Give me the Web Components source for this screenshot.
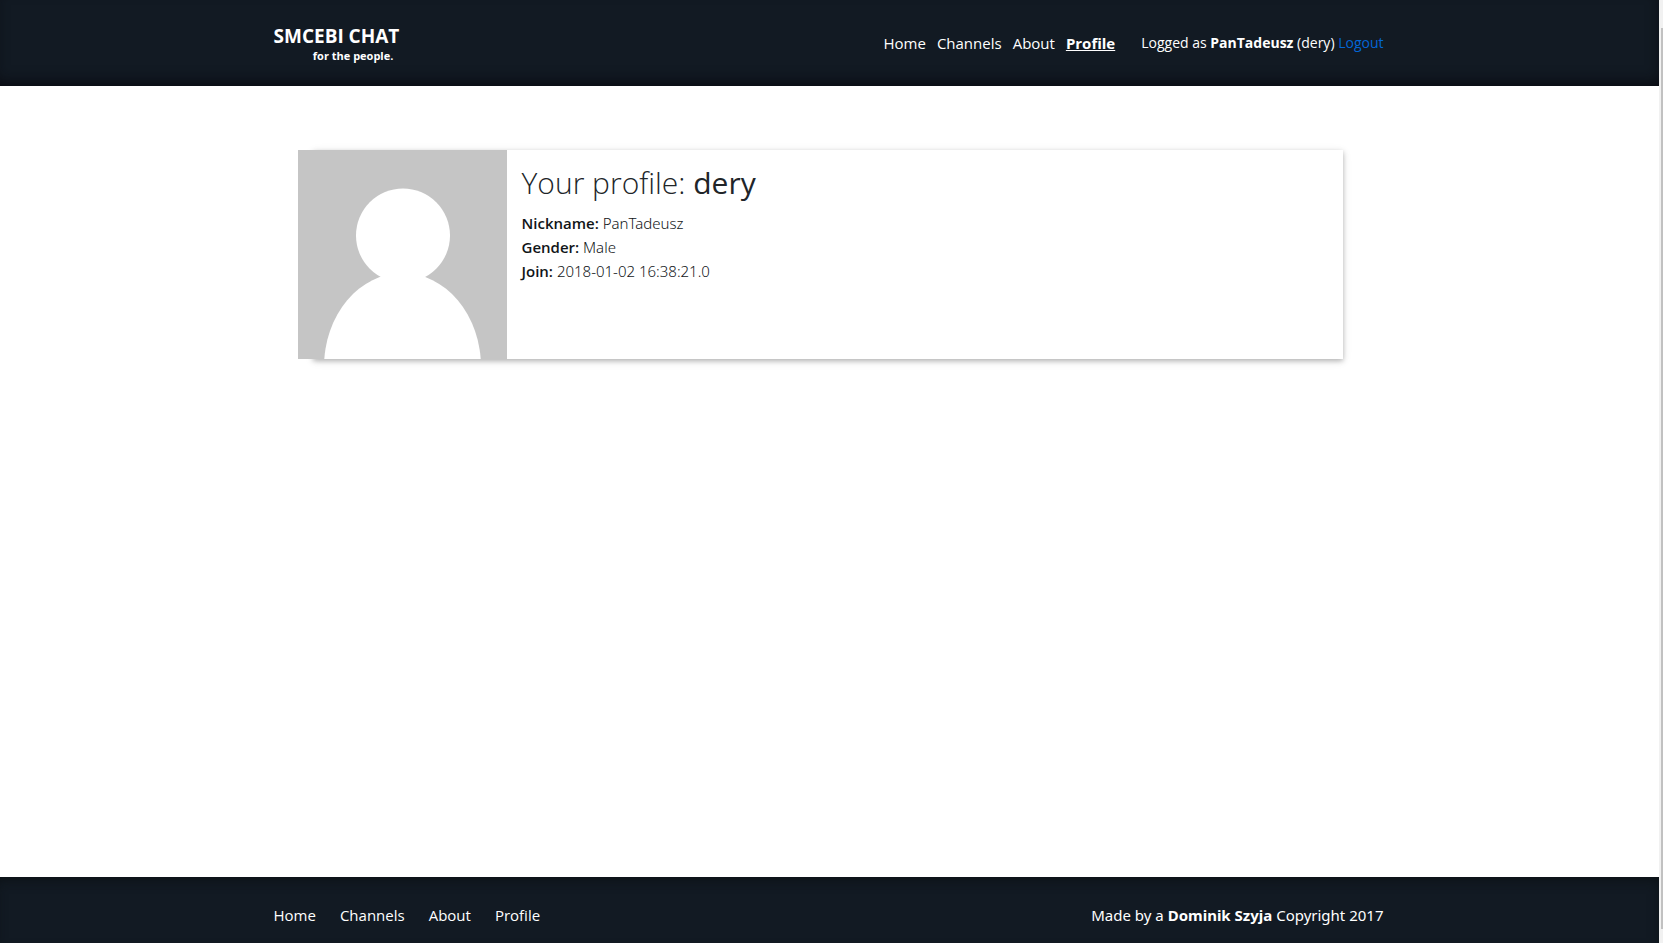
<!DOCTYPE html>
<html lang="en">
<head>
<meta charset="utf-8">
<title>SMCEBI CHAT</title>
<style>
html, body { margin: 0; height: 100%; }
body { font-family: "Segoe UI", "Open Sans", "Noto Sans", sans-serif; font-size: 15px; line-height: 24px; color: #212529; background: #fff; }
</style>
</head>
<body>
<chat-page>
  <site-header slot="header"></site-header>
  <profile-card name="dery">
    <profile-field label="Nickname:">PanTadeusz</profile-field>
    <profile-field label="Gender:">Male</profile-field>
    <profile-field label="Join:">2018-01-02 16:38:21.0</profile-field>
  </profile-card>
  <site-footer slot="footer"></site-footer>
</chat-page>
<script>
class Base extends HTMLElement {
  connectedCallback() {
    if (this.shadowRoot) return;
    this.attachShadow({ mode: "open" }).innerHTML = this.render();
  }
}

customElements.define("chat-page", class extends Base {
  render() {
    return `<style>
      :host { display: grid; grid-template-columns: minmax(0, 1fr) 4px; min-height: 100vh; }
      .page { display: flex; flex-direction: column; }
      main { flex: 1; box-sizing: border-box; width: 100%; max-width: 1110px; margin: 0 auto; padding: 64px 42px 40px 38px; }
      .scroll { display: flex; box-sizing: border-box; background: #f1f1f1; padding: 28px 0 14px 2px; }
      .thumb { flex: 1; background: #c1c1c1; }
    </style>
    <div class="page"><slot name="header"></slot><main><slot></slot></main><slot name="footer"></slot></div>
    <div class="scroll" aria-hidden="true"><div class="thumb"></div></div>`;
  }
});

customElements.define("nav-links", class extends Base {
  render() {
    const active = this.getAttribute("active");
    const links = ["Home", "Channels", "About", "Profile"]
      .map(n => `<a href="#${n.toLowerCase()}"${n === active ? ' class="active"' : ""}>${n}</a>`).join("");
    return `<style>
      :host { display: block; }
      nav { display: flex; gap: var(--gap, 11px); }
      a { color: #fff; text-decoration: none; }
      .active { font-weight: 700; text-decoration: underline; }
    </style><nav>${links}</nav>`;
  }
});

customElements.define("site-header", class extends Base {
  render() {
    return `<style>
      :host { display: block; background: #121a23; color: #fff; box-shadow: inset -2px -8px 16px -6px #08080e; padding: 0 18px 0 16px; }
      .bar { display: flex; align-items: center; justify-content: space-between; max-width: 1110px; height: 86px; margin: 0 auto; }
      .brand { font-weight: 700; text-align: right; padding-top: 2px; }
      .title { font-size: 19px; line-height: 24px; }
      .tag { font-size: 11px; line-height: 16px; padding-right: 6px; }
      .right { display: flex; align-items: center; gap: 26px; }
      .user { font-size: 14px; }
      a { color: #0366d6; text-decoration: none; }
    </style>
    <header class="bar">
      <div class="brand"><div class="title">SMCEBI CHAT</div><div class="tag">for the people.</div></div>
      <div class="right">
        <nav-links active="Profile"></nav-links>
        <div class="user">Logged as <b>PanTadeusz</b> (dery) <a href="#logout">Logout</a></div>
      </div>
    </header>`;
  }
});

customElements.define("site-footer", class extends Base {
  render() {
    return `<style>
      :host { display: block; background: #121a23; color: #fff; box-shadow: inset -2px 6px 14px -5px #0a0f12; padding: 0 18px 0 16px; }
      .bar { display: flex; align-items: center; justify-content: space-between; max-width: 1110px; height: 66px; margin: 0 auto; padding-top: 10px; box-sizing: border-box; }
      nav-links { --gap: 24px; }
      .credit { font-family: "Segoe UI", "Noto Sans", "Open Sans", sans-serif; }
    </style>
    <footer class="bar"><nav-links></nav-links><div class="credit">Made by a <b>Dominik Szyja</b> Copyright 2017</div></footer>`;
  }
});

customElements.define("profile-card", class extends Base {
  render() {
    return `<style>
      :host { display: flex; background: #fff; box-shadow: 0 2px 5px rgba(0,0,0,.26), 0 2px 10px rgba(0,0,0,.08); }
      svg { display: block; flex: none; width: 209px; height: 209px; margin-left: -15px; }
      .info { padding: 12px 15px; }
      h1 { margin: 0 0 8px; font-size: 30px; line-height: 41px; font-weight: 300; }
      h1 span { font-weight: 400; }
    </style>
    <svg viewBox="0 0 209 209" role="img" aria-label="Avatar"><rect width="209" height="209" fill="#c5c5c5"/><circle cx="105" cy="85.500" r="47" fill="#fff"/><ellipse cx="104.500" cy="217" rx="78.500" ry="94" fill="#fff"/></svg>
    <div class="info"><h1>Your profile: <span>${this.getAttribute("name")}</span></h1><slot></slot></div>`;
  }
});

customElements.define("profile-field", class extends Base {
  render() {
    return `<style>
      :host { display: block; font-weight: 300; color: #111518; font-family: "Segoe UI", "Noto Sans", "Open Sans", sans-serif; }
      span { font-weight: 600; font-family: "Segoe UI", "Open Sans", sans-serif; }
    </style><span>${this.getAttribute("label")}</span> <slot></slot>`;
  }
});
</script>
</body>
</html>
